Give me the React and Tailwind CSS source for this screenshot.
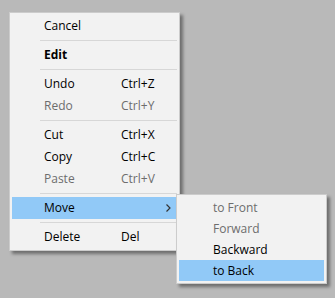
import React from "react";

const font = { fontFamily: '"Open Sans", "Noto Sans", sans-serif' };

function Item({ label, shortcut, disabled, bold, active, arrow }) {
    return (
        <div
            className={`relative flex items-center h-[22px] pl-[32px] ${active ? "bg-[#91c9f7]" : ""} ${
                disabled ? "text-[#6d6d6d]" : "text-black"
            } ${bold ? "font-bold" : ""}`}>
            <span className="w-[77px]">{label}</span>
            {shortcut && <span>{shortcut}</span>}
            {arrow && (
                <svg className="absolute right-[6px] top-[7px]" width="5" height="8" viewBox="0 0 5 8">
                    <path d="M0.5 0.5 L4 4 L0.5 7.5" fill="none" stroke="#333" strokeWidth="1.2" />
                </svg>
            )}
        </div>
    );
}

function Sep() {
    return (
        <div className="h-[7px] flex items-center pl-[28px]">
            <div className="h-px w-full bg-[#d7d7d7]" />
        </div>
    );
}

function SubItem({ label, disabled, active }) {
    return (
        <div
            className={`flex items-center h-[21px] pl-[34px] ${active ? "bg-[#91c9f7]" : ""} ${
                disabled ? "text-[#6d6d6d]" : "text-black"
            }`}>
            {label}
        </div>
    );
}

export default function App() {
    return (
        <div className="w-[335px] h-[298px] bg-[#b9b9b9] text-[12px] leading-none overflow-hidden" style={font}>
            <div className="relative pt-[12px] pl-[9px]">
                {/* main context menu */}
                <div className="w-[171px] bg-[#f2f2f2] border border-[#cccccc] p-[2px] shadow-[3px_3px_3px_rgba(0,0,0,0.4)]">
                    <Item label="Cancel" />
                    <Sep />
                    <Item label="Edit" bold />
                    <Sep />
                    <Item label="Undo" shortcut="Ctrl+Z" />
                    <Item label="Redo" shortcut="Ctrl+Y" disabled />
                    <Sep />
                    <Item label="Cut" shortcut="Ctrl+X" />
                    <Item label="Copy" shortcut="Ctrl+C" />
                    <Item label="Paste" shortcut="Ctrl+V" disabled />
                    <Sep />
                    <Item label="Move" active arrow />
                    <Sep />
                    <Item label="Delete" shortcut="Del" />
                </div>

                {/* Move submenu */}
                <div className="absolute left-[176px] top-[194px] w-[151px] bg-[#f2f2f2] border border-[#cccccc] p-[2px] shadow-[3px_3px_3px_rgba(0,0,0,0.4)]">
                    <SubItem label="to Front" disabled />
                    <SubItem label="Forward" disabled />
                    <SubItem label="Backward" />
                    <SubItem label="to Back" active />
                </div>
            </div>
        </div>
    );
}
